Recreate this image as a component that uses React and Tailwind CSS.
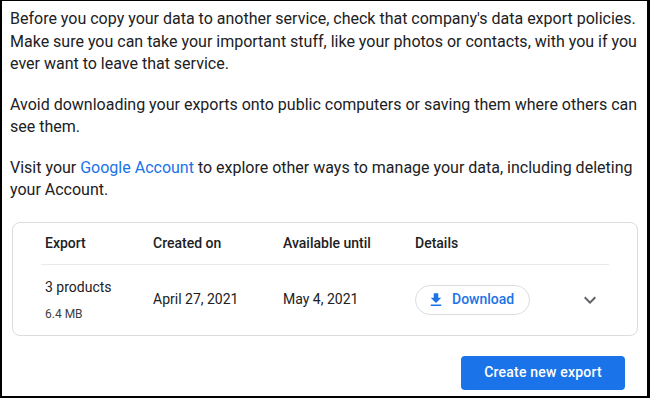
export default function App() {
  return (
    <div
      className="w-[650px] h-[398px] bg-white border-black border-l-2 border-t border-r-[3px] border-b-2 overflow-hidden text-[#202124]"
      style={{ fontFamily: "Roboto, 'Noto Sans', sans-serif" }}
    >
      <div className="pl-[8px] pr-[8px] pt-[7px]">
        <p className="text-[16px] leading-[22.5px]">
          Before you copy your data to another service, check that company's data export policies. Make sure you can take your important stuff, like your photos or contacts, with you if you ever want to leave that service.
        </p>
        <p className="text-[16px] leading-[22.5px] mt-[18px]">
          Avoid downloading your exports onto public computers or saving them where others can see them.
        </p>
        <p className="text-[16px] leading-[22.5px] mt-[18px]">
          Visit your <a className="text-[#1a73e8]">Google Account</a> to explore other ways to manage your data, including deleting your Account.
        </p>
        <div className="mt-[20px] ml-[2px] mr-[1px] border border-[#dadce0] rounded-[8px] h-[114px] px-[28px]">
          <div className="grid grid-cols-[108px_130px_132px_1fr] h-[42px] items-center border-b border-[#e8eaed] text-[14px] font-medium">
            <div className="pl-[4px] pt-[1px]">Export</div>
            <div className="pl-[4px] pt-[1px]">Created on</div>
            <div className="pl-[4px] pt-[1px]">Available until</div>
            <div className="pl-[4px] pt-[1px]">Details</div>
          </div>
          <div className="grid grid-cols-[108px_130px_132px_1fr] h-[70px] items-center text-[14px]">
            <div className="pl-[4px] flex flex-col">
              <span className="leading-[20px]">3 products</span>
              <span className="text-[12px] leading-[16px] mt-[9px] text-[#3c4043]">6.4 MB</span>
            </div>
            <div className="pl-[4px]">April 27, 2021</div>
            <div className="pl-[4px]">May 4, 2021</div>
            <div className="pl-[4px] flex items-center justify-between">
              <button className="h-[30px] w-[115px] rounded-full border border-[#dadce0] flex items-center pl-[11px] text-[#1a73e8] font-medium text-[14px]">
                <svg width="18" height="18" viewBox="0 0 24 24" fill="#1a73e8">
                  <path d="M19 9h-4V3H9v6H5l7 7 7-7zM5 18v2h14v-2H5z" />
                </svg>
                <span className="ml-[7px]">Download</span>
              </button>
              <svg width="24" height="24" viewBox="0 0 24 24" fill="#5f6368" className="mr-[7px]">
                <path d="M16.59 8.59L12 13.17 7.41 8.59 6 10l6 6 6-6z" />
              </svg>
            </div>
          </div>
        </div>
        <div className="flex justify-end mt-[20px] mr-[14px]">
          <button className="h-[34px] w-[164px] rounded-[4px] bg-[#1a73e8] text-white text-[14px] font-medium tracking-[0.2px]">
            Create new export
          </button>
        </div>
      </div>
    </div>
  );
}
